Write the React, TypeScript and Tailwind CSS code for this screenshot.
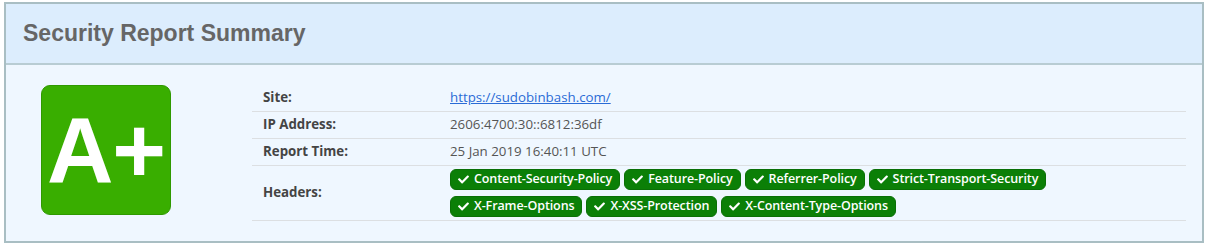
import React from 'react';

const HEADERS = [
  'Content-Security-Policy',
  'Feature-Policy',
  'Referrer-Policy',
  'Strict-Transport-Security',
  'X-Frame-Options',
  'X-XSS-Protection',
  'X-Content-Type-Options',
];

function CheckIcon() {
  return (
    <svg viewBox="0 0 512 512" className="w-[11px] h-[11px] fill-white shrink-0">
      <path d="M173.9 439.4l-166.4-166.4c-10-10-10-26.2 0-36.2l36.2-36.2c10-10 26.2-10 36.2 0L192 312.7 432.1 72.6c10-10 26.2-10 36.2 0l36.2 36.2c10 10 10 26.2 0 36.2L210.1 439.4c-10 10-26.2 10-36.2 0z" />
    </svg>
  );
}

function Badge({ label }: { label: string }) {
  return (
    <span className="inline-flex items-center gap-[5px] h-[21px] px-[7px] rounded-[6px] bg-[#0b7f07] border border-[#0a6f06] text-white text-[12.5px] font-semibold tracking-[-0.1px]">
      <CheckIcon />
      {label}
    </span>
  );
}

function Row({ label, children, last }: { label: string; children: React.ReactNode; last?: boolean }) {
  return (
    <div className={`flex items-center border-b border-[#dcdfe2] ${last ? 'h-[55px]' : 'h-[27px]'}`}>
      <div className="w-[198px] shrink-0 pl-[11px] font-bold text-[#444]">{label}</div>
      <div className="flex-1 text-[#555]">{children}</div>
    </div>
  );
}

export default function App() {
  return (
    <div className="pt-[2px] pl-[4px]">
      <div className="w-[1200px] h-[241px] border-2 border-[#a9bec3] bg-[#eff7ff] flex flex-col">
        <div className="h-[61px] shrink-0 bg-[#dcedfd] border-b-2 border-[#b8ccd3] flex items-center pl-[17px]">
          <h1 className="text-[23px] font-bold text-[#666] font-['Liberation_Sans',Arial,sans-serif]">Security Report Summary</h1>
        </div>
        <div className="flex pt-[20px] pl-[35px] pr-[16px]">
          <div className="w-[130px] h-[130px] shrink-0 rounded-[9px] bg-[#39ae00] border border-[#2f9900] flex items-center justify-center text-white font-bold text-[92px] leading-none font-['Liberation_Sans',Arial,sans-serif] tracking-[-1px]">
            A+
          </div>
          <div className="ml-[81px] flex-1 font-['Open_Sans',sans-serif] text-[13.3px]">
            <Row label="Site:">
              <a href="#" className="text-[#2a6bd6] underline">https://sudobinbash.com/</a>
            </Row>
            <Row label="IP Address:">2606:4700:30::6812:36df</Row>
            <Row label="Report Time:">25 Jan 2019 16:40:11 UTC</Row>
            <Row label="Headers:" last>
              <div className="flex flex-wrap gap-x-[4px] gap-y-[3px] w-[640px]">
                {HEADERS.slice(0, 4).map(h => <Badge key={h} label={h} />)}
                <div className="basis-full h-0" />
                {HEADERS.slice(4).map(h => <Badge key={h} label={h} />)}
              </div>
            </Row>
          </div>
        </div>
      </div>
    </div>
  );
}
